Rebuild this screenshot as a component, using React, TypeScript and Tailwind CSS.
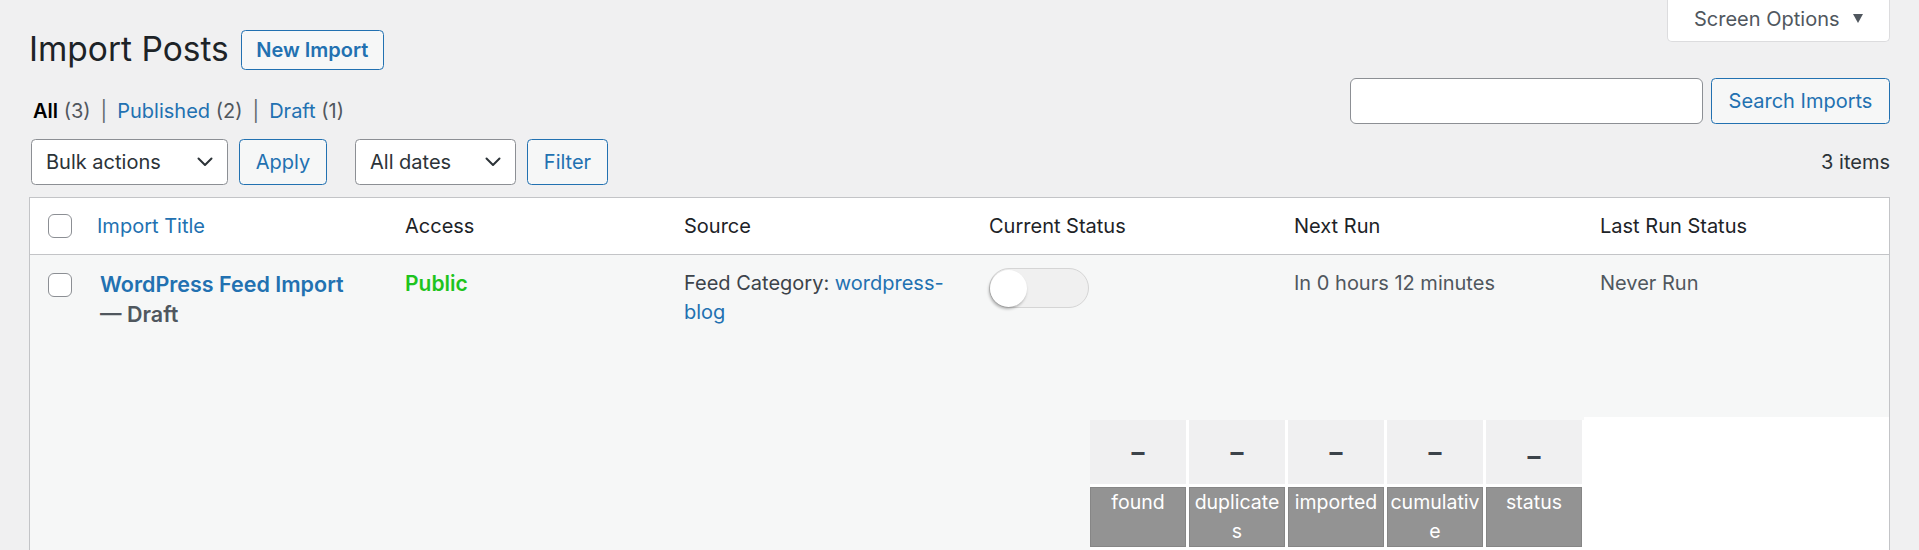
import React from "react";

function Chevron() {
  return (
    <svg width="16" height="10" viewBox="0 0 16 10" fill="none">
      <polyline points="1.5,1.5 8,8 14.5,1.5" stroke="#2c3338" strokeWidth="2" strokeLinecap="round" strokeLinejoin="round" />
    </svg>
  );
}

function Checkbox() {
  return <div className="h-[24px] w-[24px] rounded-[6px] border-[1.5px] border-[#8c8f94] bg-white" />;
}

const stats = [
  { label: "found", low: false },
  { label: "duplicates", low: false },
  { label: "imported", low: false },
  { label: "cumulative", low: false },
  { label: "status", low: true },
];

export default function App() {
  return (
    <div className="h-[550px] overflow-hidden bg-[#f0f0f1] px-[29px] font-[Inter,sans-serif] text-[20px] text-[#3c434a]">
      {/* Title row */}
      <div className="flex items-start justify-between">
        <div className="flex items-center pt-[27px]">
          <h1 className="text-[33.5px] font-normal leading-[45px] text-[#1d2327]">Import Posts</h1>
          <a className="ml-[12px] flex h-[40px] w-[143px] items-center justify-center rounded-[4.5px] border border-[#2271b1] bg-[#f6f7f7] text-[20px] font-semibold text-[#2271b1]">
            New Import
          </a>
        </div>
        <button className="flex h-[42px] w-[223px] items-center justify-between rounded-b-[5px] border border-t-0 border-[#dcdcde] bg-white pb-[4px] pl-[26px] pr-[26px] text-[20px] text-[#50575e]">
          <span>Screen Options</span>
          <svg width="10" height="9" viewBox="0 0 10 9">
            <path d="M0 0H10L5 9Z" fill="#50575e" />
          </svg>
        </button>
      </div>

      {/* Views + search */}
      <div className="mt-[6px] flex items-start justify-between">
        <ul className="flex pl-[4px] pt-[19px] leading-[29px]">
          <li>
            <span className="font-semibold text-black">All</span> <span className="text-[#50575e]">(3)</span>
            <span className="mx-[10px] text-[#646970]">|</span>
          </li>
          <li>
            <a className="text-[#2271b1]">Published</a> <span className="text-[#50575e]">(2)</span>
            <span className="mx-[10px] text-[#646970]">|</span>
          </li>
          <li>
            <a className="text-[#2271b1]">Draft</a> <span className="text-[#50575e]">(1)</span>
          </li>
        </ul>
        <div className="flex gap-[8px]">
          <input className="h-[46px] w-[353px] rounded-[6px] border border-[#8c8f94] bg-white px-[12px] outline-none" />
          <button className="flex h-[46px] w-[179px] items-center justify-center rounded-[4.5px] border border-[#2271b1] bg-[#f6f7f7] text-[#2271b1]">
            Search Imports
          </button>
        </div>
      </div>

      {/* Tablenav */}
      <div className="mt-[13px] flex items-center justify-between">
        <div className="flex items-center pl-[2px]">
          <div className="flex h-[46px] w-[197px] items-center justify-between rounded-[4.5px] border border-[#8c8f94] bg-white pl-[14px] pr-[14px] text-[#2c3338]">
            <span>Bulk actions</span>
            <Chevron />
          </div>
          <button className="ml-[11px] flex h-[46px] w-[88px] items-center justify-center rounded-[4.5px] border border-[#2271b1] bg-[#f6f7f7] text-[#2271b1]">
            Apply
          </button>
          <div className="ml-[28px] flex h-[46px] w-[161px] items-center justify-between rounded-[4.5px] border border-[#8c8f94] bg-white pl-[14px] pr-[14px] text-[#2c3338]">
            <span>All dates</span>
            <Chevron />
          </div>
          <button className="ml-[11px] flex h-[46px] w-[81px] items-center justify-center rounded-[4.5px] border border-[#2271b1] bg-[#f6f7f7] text-[#2271b1]">
            Filter
          </button>
        </div>
        <div className="text-[#2c3338]">3 items</div>
      </div>

      {/* Table */}
      <div className="mt-[12px] border border-[#c3c4c7] bg-white">
        <div className="grid h-[57px] grid-cols-[52px_308px_279px_305px_305px_306px_304px] items-center border-b border-[#c3c4c7] text-[#1d2327]">
          <div className="pl-[18px]">
            <Checkbox />
          </div>
          <div className="pl-[15px]">
            <a className="text-[#2271b1]">Import Title</a>
          </div>
          <div className="pl-[15px]">Access</div>
          <div className="pl-[15px]">Source</div>
          <div className="pl-[15px]">Current Status</div>
          <div className="pl-[15px]">Next Run</div>
          <div className="pl-[15px]">Last Run Status</div>
        </div>

        <div className="bg-[#f6f7f7] pb-[40px]">
          <div className="grid h-[162px] grid-cols-[52px_308px_279px_305px_305px_306px_304px] items-start leading-[29px]">
            <div className="pl-[18px] pt-[18px]">
              <Checkbox />
            </div>
            <div className="pl-[18px] pr-[12px] pt-[15px]">
              <strong className="text-[21.5px] font-semibold text-[#50575e]">
                <a className="text-[#2271b1]">WordPress Feed Import</a> {"—\u00a0"}
                <span>Draft</span>
              </strong>
            </div>
            <div className="pl-[15px] pt-[14px]">
              <span className="text-[21px] font-semibold text-[#1ec41e]">Public</span>
            </div>
            <div className="pl-[15px] pr-[15px] pt-[14px]">
              <span>Feed Category: </span>
              <a className="text-[#2271b1]">wordpress-blog</a>
            </div>
            <div className="pl-[15px] pt-[13px]">
              <div className="flex h-[40px] w-[100px] items-center rounded-full border border-[#d5d5d5] bg-[#f0f0f0]">
                <div className="h-[37px] w-[37px] rounded-full bg-white shadow-[-1px_2px_3px_rgba(0,0,0,0.3)]" />
              </div>
            </div>
            <div className="pl-[15px] pt-[14px] text-[#50575e]">In 0 hours 12 minutes</div>
            <div className="pl-[15px] pt-[14px] text-[#50575e]">Never Run</div>
          </div>

          <div className="flex">
            <div className="w-[1060px] flex-none" />
            <div className="mt-[3px] flex gap-[3px] bg-white pb-[3px] pr-[2px]">
              {stats.map((s) => (
                <div key={s.label} className="flex w-[96px] flex-col gap-[3px]">
                  <div className="flex h-[64px] items-center justify-center bg-[#f0f0f1] text-[26px] font-bold leading-none text-[#3c434a]">
                    <span className={s.low ? "pt-[8px]" : ""}>–</span>
                  </div>
                  <div className="h-[60px] break-all border border-[#868686] bg-[#939393] text-center text-[19.5px] leading-[29px] text-white">
                    {s.label}
                  </div>
                </div>
              ))}
            </div>
            <div className="flex-1 bg-white" />
          </div>
        </div>
      </div>
    </div>
  );
}
